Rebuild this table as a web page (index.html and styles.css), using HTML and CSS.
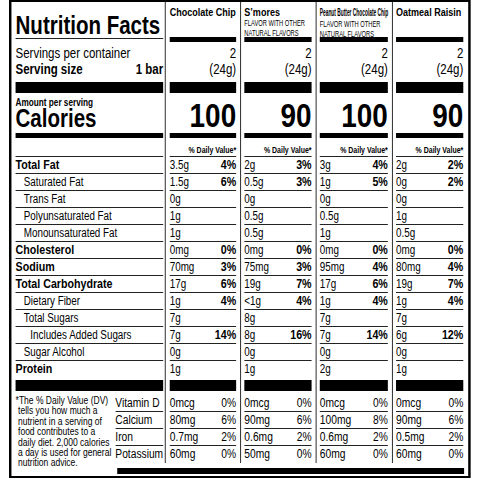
FILE: index.html
```html
<!DOCTYPE html>
<html lang="en">
<head>
    <meta charset="UTF-8">
    <meta name="viewport" content="width=device-width, initial-scale=1.0">
    <title>Nutrition Facts</title>
    <link rel="stylesheet" href="styles.css">
</head>
<body>
  <div class="page">
    <div class="label">
        <div class="cols">
            <!-- names column -->
            <div class="col side">
                <div class="head"><h1 class="title">Nutrition Facts</h1></div>
                <div class="serv">
                    <div class="serv-line">Servings per container</div>
                    <div class="serv-line bold split"><span>Serving size</span><span>1 bar</span></div>
                </div>
                <div class="bar lg"></div>
                <div class="cal">
                    <div class="amount">Amount per serving</div>
                    <div class="cal-word">Calories</div>
                </div>
                <div class="bar md"></div>
                <div class="dv"></div>
                <div class="row"><b>Total Fat</b></div>
                <div class="row sub">Saturated Fat</div>
                <div class="row sub">Trans Fat</div>
                <div class="row sub">Polyunsaturated Fat</div>
                <div class="row sub">Monounsaturated Fat</div>
                <div class="row"><b>Cholesterol</b></div>
                <div class="row"><b>Sodium</b></div>
                <div class="row"><b>Total Carbohydrate</b></div>
                <div class="row sub">Dietary Fiber</div>
                <div class="row sub">Total Sugars</div>
                <div class="row sub2">Includes Added Sugars</div>
                <div class="row sub">Sugar Alcohol</div>
                <div class="row last"><b>Protein</b></div>
                <div class="bar lg"></div>
                <div class="foot">
                    <p class="note">*The % Daily Value (DV)<br>tells you how much a<br>nutrient in a serving of<br>food contributes to a<br>daily diet. 2,000 calories<br>a day is used for general<br>nutrition advice.</p>
                    <div class="vits">
                        <div class="vrow">Vitamin D</div>
                        <div class="vrow">Calcium</div>
                        <div class="vrow">Iron</div>
                        <div class="vrow">Potassium</div>
                    </div>
                </div>
            </div>

            <!-- Chocolate Chip -->
            <div class="col c1">
                <div class="head"><div class="flavor">Chocolate Chip</div></div>
                <div class="bar sm"></div>
                <div class="serv">
                    <div class="serv-line num">2</div>
                    <div class="serv-line num">(24g)</div>
                </div>
                <div class="bar lg"></div>
                <div class="cal"><div class="cal-num">100</div></div>
                <div class="bar md"></div>
                <div class="dv">% Daily Value*</div>
                <div class="row"><span>3.5g</span><b>4%</b></div>
                <div class="row"><span>1.5g</span><b>6%</b></div>
                <div class="row"><span>0g</span></div>
                <div class="row"><span>1g</span></div>
                <div class="row"><span>1g</span></div>
                <div class="row"><span>0mg</span><b>0%</b></div>
                <div class="row"><span>70mg</span><b>3%</b></div>
                <div class="row"><span>17g</span><b>6%</b></div>
                <div class="row"><span>1g</span><b>4%</b></div>
                <div class="row"><span>7g</span></div>
                <div class="row"><span>7g</span><b>14%</b></div>
                <div class="row"><span>0g</span></div>
                <div class="row last"><span>1g</span></div>
                <div class="bar lg"></div>
                <div class="vits">
                    <div class="vrow"><span>0mcg</span><span>0%</span></div>
                    <div class="vrow"><span>80mg</span><span>6%</span></div>
                    <div class="vrow"><span>0.7mg</span><span>2%</span></div>
                    <div class="vrow"><span>60mg</span><span>0%</span></div>
                </div>
            </div>

            <!-- S'mores -->
            <div class="col c2">
                <div class="head">
                    <div class="flavor">S’mores</div>
                    <div class="flavor-note"><span>FLAVOR WITH OTHER<br>NATURAL FLAVORS</span></div>
                </div>
                <div class="bar sm"></div>
                <div class="serv">
                    <div class="serv-line num">2</div>
                    <div class="serv-line num">(24g)</div>
                </div>
                <div class="bar lg"></div>
                <div class="cal"><div class="cal-num">90</div></div>
                <div class="bar md"></div>
                <div class="dv">% Daily Value*</div>
                <div class="row"><span>2g</span><b>3%</b></div>
                <div class="row"><span>0.5g</span><b>3%</b></div>
                <div class="row"><span>0g</span></div>
                <div class="row"><span>0.5g</span></div>
                <div class="row"><span>0.5g</span></div>
                <div class="row"><span>0mg</span><b>0%</b></div>
                <div class="row"><span>75mg</span><b>3%</b></div>
                <div class="row"><span>19g</span><b>7%</b></div>
                <div class="row"><span>&lt;1g</span><b>4%</b></div>
                <div class="row"><span>8g</span></div>
                <div class="row"><span>8g</span><b>16%</b></div>
                <div class="row"><span>0g</span></div>
                <div class="row last"><span>1g</span></div>
                <div class="bar lg"></div>
                <div class="vits">
                    <div class="vrow"><span>0mcg</span><span>0%</span></div>
                    <div class="vrow"><span>90mg</span><span>6%</span></div>
                    <div class="vrow"><span>0.6mg</span><span>2%</span></div>
                    <div class="vrow"><span>50mg</span><span>0%</span></div>
                </div>
            </div>

            <!-- Peanut Butter Chocolate Chip -->
            <div class="col c3">
                <div class="head">
                    <div class="flavor tight"><span>Peanut Butter Chocolate Chip</span></div>
                    <div class="flavor-note"><span>FLAVOR WITH OTHER<br>NATURAL FLAVORS</span></div>
                </div>
                <div class="bar sm"></div>
                <div class="serv">
                    <div class="serv-line num">2</div>
                    <div class="serv-line num">(24g)</div>
                </div>
                <div class="bar lg"></div>
                <div class="cal"><div class="cal-num">100</div></div>
                <div class="bar md"></div>
                <div class="dv">% Daily Value*</div>
                <div class="row"><span>3g</span><b>4%</b></div>
                <div class="row"><span>1g</span><b>5%</b></div>
                <div class="row"><span>0g</span></div>
                <div class="row"><span>0.5g</span></div>
                <div class="row"><span>1g</span></div>
                <div class="row"><span>0mg</span><b>0%</b></div>
                <div class="row"><span>95mg</span><b>4%</b></div>
                <div class="row"><span>17g</span><b>6%</b></div>
                <div class="row"><span>1g</span><b>4%</b></div>
                <div class="row"><span>7g</span></div>
                <div class="row"><span>7g</span><b>14%</b></div>
                <div class="row"><span>0g</span></div>
                <div class="row last"><span>2g</span></div>
                <div class="bar lg"></div>
                <div class="vits">
                    <div class="vrow"><span>0mcg</span><span>0%</span></div>
                    <div class="vrow"><span>100mg</span><span>8%</span></div>
                    <div class="vrow"><span>0.6mg</span><span>2%</span></div>
                    <div class="vrow"><span>60mg</span><span>0%</span></div>
                </div>
            </div>

            <!-- Oatmeal Raisin -->
            <div class="col c4">
                <div class="head"><div class="flavor">Oatmeal Raisin</div></div>
                <div class="bar sm"></div>
                <div class="serv">
                    <div class="serv-line num">2</div>
                    <div class="serv-line num">(24g)</div>
                </div>
                <div class="bar lg"></div>
                <div class="cal"><div class="cal-num">90</div></div>
                <div class="bar md"></div>
                <div class="dv">% Daily Value*</div>
                <div class="row"><span>2g</span><b>2%</b></div>
                <div class="row"><span>0g</span><b>2%</b></div>
                <div class="row"><span>0g</span></div>
                <div class="row"><span>1g</span></div>
                <div class="row"><span>0.5g</span></div>
                <div class="row"><span>0mg</span><b>0%</b></div>
                <div class="row"><span>80mg</span><b>4%</b></div>
                <div class="row"><span>19g</span><b>7%</b></div>
                <div class="row"><span>1g</span><b>4%</b></div>
                <div class="row"><span>7g</span></div>
                <div class="row"><span>6g</span><b>12%</b></div>
                <div class="row"><span>0g</span></div>
                <div class="row last"><span>1g</span></div>
                <div class="bar lg"></div>
                <div class="vits">
                    <div class="vrow"><span>0mcg</span><span>0%</span></div>
                    <div class="vrow"><span>90mg</span><span>6%</span></div>
                    <div class="vrow"><span>0.5mg</span><span>2%</span></div>
                    <div class="vrow"><span>60mg</span><span>0%</span></div>
                </div>
            </div>
        </div>
        <div class="end-bar"></div>
    </div>
  </div>
</body>
</html>
```

FILE: styles.css
```css
* {
    box-sizing: border-box;
}

body {
    margin: 0;
    background: #fff;
    color: #000;
    font-family: "Liberation Sans", Arial, sans-serif;
}

.page {
    width: 472px;
    overflow: clip;
}

/* no narrow face is installed, so the label is squeezed
   and Arial reads like Arial Narrow */
.label {
    width: 563px;
    margin-left: 9px;
    border: 2px solid #000;
    border-left-width: 3px;
    border-right-width: 3px;
    padding-bottom: 2px;
    transform: scaleX(0.82);
    transform-origin: 0 0;
}

.cols {
    display: flex;
}

.col {
    flex: none;
    border-left: 1px solid #000;
    padding: 0 5px 0 4px;
}

.side {
    width: 187px;
    border-left: none;
    padding: 0 2px 0 5px;
}

.c1 { width: 92px; padding-left: 5px; }
.c2 { width: 92px; }
.c3 { width: 93px; }
.c4 { width: 93px; padding-right: 6px; }

/* header */
.head {
    height: 35px;
    padding-top: 4px;
}

.side .head {
    height: 37px;
    padding-top: 11px;
    border-bottom: 1px solid #222;
}

.title {
    margin: 0;
    font-size: 25px;
    line-height: 24px;
    font-weight: bold;
    white-space: nowrap;
}

.flavor {
    font-size: 11px;
    line-height: 12px;
    font-weight: bold;
    white-space: nowrap;
}

.tight span {
    display: inline-block;
    font-size: 10px;
    transform: scaleX(0.59);
    transform-origin: 0 50%;
}

.flavor-note {
    font-size: 9px;
    line-height: 10px;
    white-space: nowrap;
}

.flavor-note span {
    display: inline-block;
    transform: scaleX(0.78);
    transform-origin: 0 0;
}

/* black rules */
.bar { background: #000; }
.bar.sm { height: 5px; }
.bar.md { height: 5px; }
.bar.lg { height: 11px; }

/* servings */
.serv {
    height: 40px;
    display: flex;
    flex-direction: column;
    justify-content: flex-end;
    padding-bottom: 5px;
}

.side .serv { height: 43px; }

.serv-line {
    font-size: 14px;
    line-height: 16px;
}

.serv-line.num { text-align: right; }
.serv-line.bold { font-weight: bold; }

.split {
    display: flex;
    justify-content: space-between;
}

/* calories */
.cal {
    height: 40px;
    display: flex;
    flex-direction: column;
    justify-content: flex-end;
}

.amount {
    font-size: 10px;
    line-height: 11px;
    font-weight: bold;
    margin-bottom: -2px;
}

.cal-word {
    font-size: 25px;
    line-height: 25px;
    font-weight: bold;
    padding-bottom: 2px;
}

.cal-num {
    font-size: 34px;
    line-height: 34px;
    font-weight: bold;
    text-align: right;
    padding-bottom: 1px;
}

.dv {
    height: 19px;
    padding-top: 7px;
    border-bottom: 1px solid #222;
    font-size: 8.5px;
    line-height: 10px;
    font-weight: bold;
    text-align: right;
}

/* nutrient rows */
.row {
    height: 17px;
    display: flex;
    justify-content: space-between;
    border-bottom: 1px solid #222;
    font-size: 12px;
    line-height: 16px;
}

.row b { font-size: 13px; }

.row.sub { padding-left: 10px; }
.row.sub2 { padding-left: 18px; }

.row.last {
    height: 19px;
    border-bottom: none;
}

/* vitamins and footnote */
.foot {
    display: flex;
    height: 72px;
}

.note {
    width: 122px;
    margin: 0;
    padding: 5px 0 0 3px;
    text-indent: -3px;
    font-size: 10.4px;
    line-height: 10.4px;
    white-space: nowrap;
}

.side .vits { flex: 1; }

.vits { height: 72px; }

.vrow {
    height: 17px;
    display: flex;
    justify-content: space-between;
    border-bottom: 1px solid #222;
    font-size: 12.5px;
    line-height: 16px;
}

.vrow:first-child {
    height: 21px;
    padding-top: 4px;
}

.vrow:last-child { border-bottom: none; }

.end-bar {
    height: 6px;
    margin: 5px 5px 0 129px;
    background: #000;
}
```
